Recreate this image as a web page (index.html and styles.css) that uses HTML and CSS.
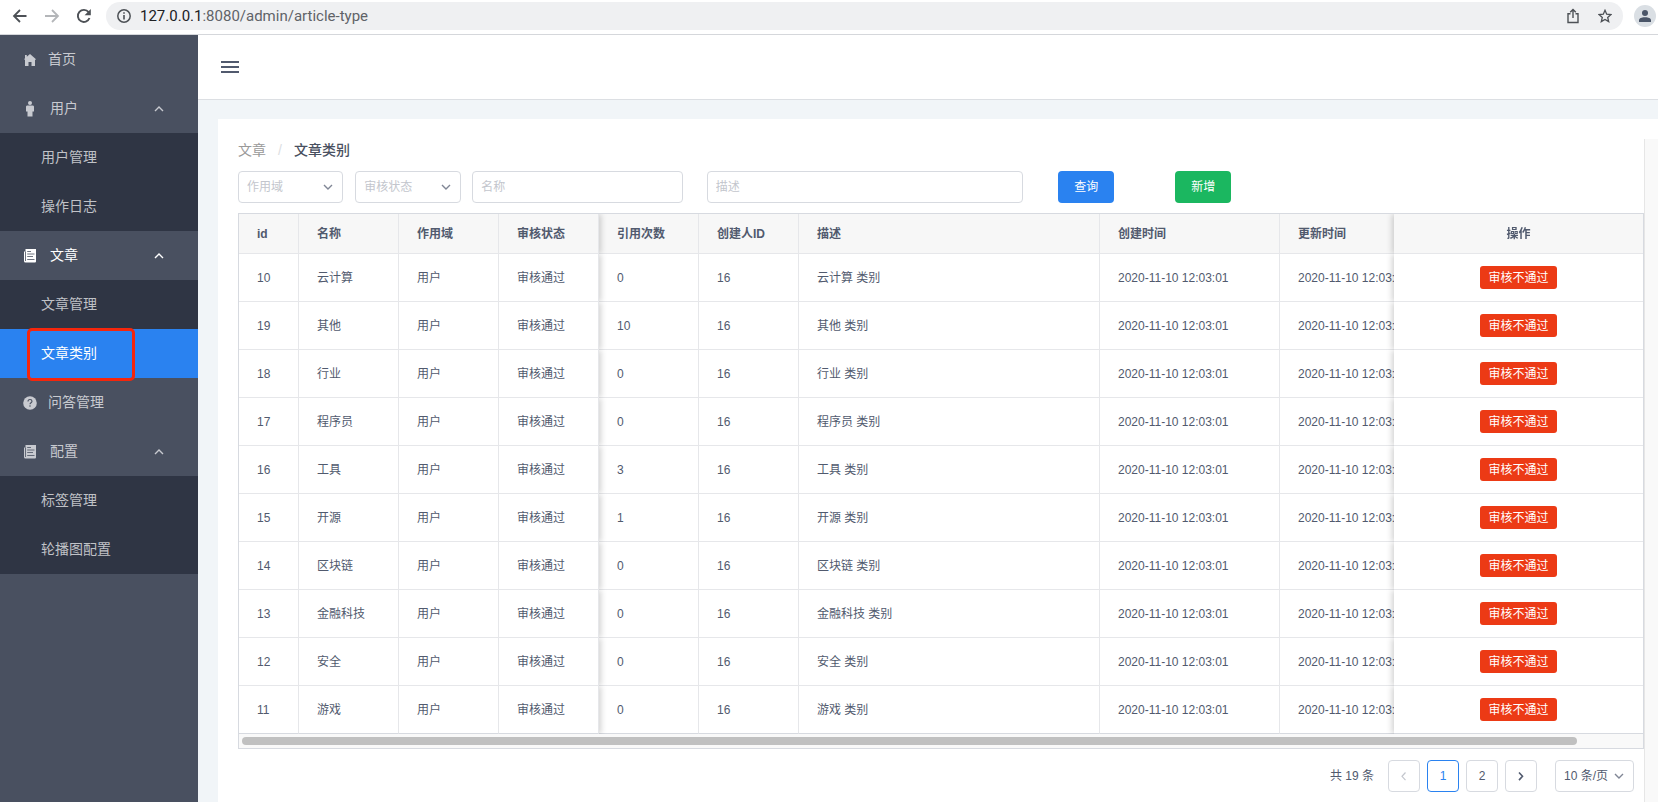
FILE: index.html
```html
<!DOCTYPE html>
<html lang="zh-CN">
<head>
<meta charset="utf-8">
<title>文章类别</title>
<link rel="stylesheet" href="styles.css">
</head>
<body>
<svg class="defs" aria-hidden="true">
  <symbol id="up" viewBox="0 0 10 10"><path d="M1 7l4-4 4 4" fill="none" stroke="currentColor" stroke-width="1.4"/></symbol>
  <symbol id="down" viewBox="0 0 10 10"><path d="M1 3l4 4 4-4" fill="none" stroke="currentColor" stroke-width="1.4"/></symbol>
  <symbol id="paper" viewBox="0 0 12 14"><path d="M1.500 0H12v12.500a1 1 0 0 1-1 1H1.500A1.500 1.500 0 0 1 0 12V2.500h1.500z" fill="currentColor"/><path d="M1.500 2.500v9.500M3.200 2.500H7M3.200 5h7.300M3.200 7.500h5.800M3.200 10.500h7.300" stroke="#495060" stroke-width=".8"/></symbol>
</svg>

<header class="browser">
  <button class="nav" aria-label="后退"><svg width="16" height="16" viewBox="0 0 16 16"><path d="M14.500 8H2M8 2L2 8l6 6" fill="none" stroke="#4d5156" stroke-width="1.800"/></svg></button>
  <button class="nav" aria-label="前进"><svg width="16" height="16" viewBox="0 0 16 16"><path d="M1 8h12.500M8 2l6 6-6 6" fill="none" stroke="#b4b6b9" stroke-width="1.800"/></svg></button>
  <button class="nav" aria-label="刷新"><svg width="16" height="16" viewBox="0 0 16 16"><path d="M13.500 10A6 6 0 1 1 12.600 4.200" fill="none" stroke="#4d5156" stroke-width="1.900"/><path d="M14.800 1v6.200H8.600z" fill="#4d5156"/></svg></button>
  <div class="address">
    <svg width="14" height="14" viewBox="0 0 14 14"><circle cx="7" cy="7" r="6.200" fill="none" stroke="#4d5156" stroke-width="1.500"/><path d="M7 6v4.500M7 3.200v1.600" stroke="#4d5156" stroke-width="1.600"/></svg>
    <span class="url"><b>127.0.0.1</b>:8080/admin/article-type</span>
    <button class="nav" aria-label="分享"><svg width="14" height="16" viewBox="0 0 14 16"><path d="M4.500 5.800H2v8.700h10V5.800H9.500M7 10V2M4.200 4.300L7 1.500l2.800 2.800" fill="none" stroke="#4d5156" stroke-width="1.400"/></svg></button>
    <button class="nav" aria-label="收藏"><svg width="14" height="14" viewBox="0 0 14 14"><path d="M7 1.300l1.700 3.900 4.200.4-3.200 2.800 1 4.200L7 10.400l-3.700 2.200 1-4.200L1.100 5.600l4.200-.4z" fill="none" stroke="#4d5156" stroke-width="1.300"/></svg></button>
  </div>
  <button class="avatar" aria-label="个人资料"><svg width="12" height="12" viewBox="0 0 12 12"><circle cx="6" cy="3" r="3" fill="#4a5568"/><path d="M0 12V9.500C1 7.500 4 7.200 6 7.200s5 .3 6 2.300V12z" fill="#4a5568"/></svg></button>
</header>

<div class="app">
  <nav class="sidebar">
    <a class="item" href="#"><svg width="12" height="12" viewBox="0 0 12 12"><path d="M6 0l6 5.200-.5.6H11V12H7.500V8h-3v4H1V5.800L0 5.200 1 4.300V1h1.800v1.800z" fill="currentColor"/></svg><span>首页</span></a>
    <button class="item group"><svg width="12" height="16" viewBox="0 0 12 16"><circle cx="6" cy="2" r="2" fill="currentColor"/><path d="M3.500 4.500h5c1 0 1.500.5 1.500 1.500v4.500H8.500V15.500h-5V10.500H2V6c0-1 .5-1.500 1.500-1.500z" fill="currentColor"/></svg><span>用户</span><svg class="caret" width="10" height="10"><use href="#up"/></svg></button>
    <div class="sub">
      <a class="leaf" href="#">用户管理</a>
      <a class="leaf" href="#">操作日志</a>
    </div>
    <button class="item group open"><svg width="12" height="14"><use href="#paper"/></svg><span>文章</span><svg class="caret" width="10" height="10"><use href="#up"/></svg></button>
    <div class="sub">
      <a class="leaf" href="#">文章管理</a>
      <a class="leaf active" href="#">文章类别</a>
    </div>
    <a class="item help" href="#"><svg width="14" height="14" viewBox="0 0 14 14"><circle cx="7" cy="7" r="6.800" fill="currentColor"/><path d="M5 5.500C5 4 6 3.500 7 3.500s2 .6 2 1.700C9 6.700 7 6.700 7 8.300M7 9.300v1.400" fill="none" stroke="#495060" stroke-width="1.100"/></svg><span>问答管理</span></a>
    <button class="item group"><svg width="12" height="14"><use href="#paper"/></svg><span>配置</span><svg class="caret" width="10" height="10"><use href="#up"/></svg></button>
    <div class="sub">
      <a class="leaf" href="#">标签管理</a>
      <a class="leaf" href="#">轮播图配置</a>
    </div>
  </nav>

  <div class="page">
    <div class="topbar">
      <button class="nav" aria-label="折叠菜单"><svg width="18" height="14" viewBox="0 0 18 14"><path d="M0 2h18M0 7h18M0 12h18" stroke="#515a6e" stroke-width="2"/></svg></button>
    </div>
    <div class="card">
      <main class="content">
        <div class="crumbs"><a href="#">文章</a><i>/</i><strong>文章类别</strong></div>
        <form class="filters">
          <div class="field select"><select aria-label="作用域"><option>作用域</option></select><svg width="10" height="10"><use href="#down"/></svg></div>
          <div class="field select"><select aria-label="审核状态"><option>审核状态</option></select><svg width="10" height="10"><use href="#down"/></svg></div>
          <div class="field"><input type="text" aria-label="名称" placeholder="名称"></div>
          <div class="field"><input type="text" aria-label="描述" placeholder="描述"></div>
          <div><button type="button" class="btn primary">查询</button></div>
          <div><button type="button" class="btn success">新增</button></div>
        </form>

        <div class="grid">
          <div class="viewport">
            <table>
              <colgroup><col class="w-id"><col class="w-s"><col class="w-s"><col class="w-s"><col class="w-s"><col class="w-s"><col class="w-desc"><col class="w-time"><col class="w-time"><col class="w-act"></colgroup>
              <thead><tr><th>id</th><th>名称</th><th>作用域</th><th class="pin">审核状态</th><th>引用次数</th><th>创建人ID</th><th>描述</th><th>创建时间</th><th>更新时间</th><th class="act">操作</th></tr></thead>
              <tbody>
                <tr><td>10</td><td>云计算</td><td>用户</td><td class="pin">审核通过</td><td>0</td><td>16</td><td>云计算 类别</td><td>2020-11-10 12:03:01</td><td>2020-11-10 12:03:01</td><td class="act"><button class="reject">审核不通过</button></td></tr>
                <tr><td>19</td><td>其他</td><td>用户</td><td class="pin">审核通过</td><td>10</td><td>16</td><td>其他 类别</td><td>2020-11-10 12:03:01</td><td>2020-11-10 12:03:01</td><td class="act"><button class="reject">审核不通过</button></td></tr>
                <tr><td>18</td><td>行业</td><td>用户</td><td class="pin">审核通过</td><td>0</td><td>16</td><td>行业 类别</td><td>2020-11-10 12:03:01</td><td>2020-11-10 12:03:01</td><td class="act"><button class="reject">审核不通过</button></td></tr>
                <tr><td>17</td><td>程序员</td><td>用户</td><td class="pin">审核通过</td><td>0</td><td>16</td><td>程序员 类别</td><td>2020-11-10 12:03:01</td><td>2020-11-10 12:03:01</td><td class="act"><button class="reject">审核不通过</button></td></tr>
                <tr><td>16</td><td>工具</td><td>用户</td><td class="pin">审核通过</td><td>3</td><td>16</td><td>工具 类别</td><td>2020-11-10 12:03:01</td><td>2020-11-10 12:03:01</td><td class="act"><button class="reject">审核不通过</button></td></tr>
                <tr><td>15</td><td>开源</td><td>用户</td><td class="pin">审核通过</td><td>1</td><td>16</td><td>开源 类别</td><td>2020-11-10 12:03:01</td><td>2020-11-10 12:03:01</td><td class="act"><button class="reject">审核不通过</button></td></tr>
                <tr><td>14</td><td>区块链</td><td>用户</td><td class="pin">审核通过</td><td>0</td><td>16</td><td>区块链 类别</td><td>2020-11-10 12:03:01</td><td>2020-11-10 12:03:01</td><td class="act"><button class="reject">审核不通过</button></td></tr>
                <tr><td>13</td><td>金融科技</td><td>用户</td><td class="pin">审核通过</td><td>0</td><td>16</td><td>金融科技 类别</td><td>2020-11-10 12:03:01</td><td>2020-11-10 12:03:01</td><td class="act"><button class="reject">审核不通过</button></td></tr>
                <tr><td>12</td><td>安全</td><td>用户</td><td class="pin">审核通过</td><td>0</td><td>16</td><td>安全 类别</td><td>2020-11-10 12:03:01</td><td>2020-11-10 12:03:01</td><td class="act"><button class="reject">审核不通过</button></td></tr>
                <tr><td>11</td><td>游戏</td><td>用户</td><td class="pin">审核通过</td><td>0</td><td>16</td><td>游戏 类别</td><td>2020-11-10 12:03:01</td><td>2020-11-10 12:03:01</td><td class="act"><button class="reject">审核不通过</button></td></tr>
              </tbody>
            </table>
          </div>
          <div class="track"><div class="thumb"></div></div>
        </div>

        <div class="pager">
          <span class="total">共 19 条</span>
          <button class="pg" aria-label="上一页" disabled><svg width="10" height="10" viewBox="0 0 10 10"><path d="M6.500 1.500L3 5.300l3.500 3.800" fill="none" stroke="currentColor" stroke-width="1.200"/></svg></button>
          <button class="pg current">1</button>
          <button class="pg">2</button>
          <button class="pg" aria-label="下一页"><svg width="10" height="10" viewBox="0 0 10 10"><path d="M3 1.500l3.500 3.800L3 9.100" fill="none" stroke="currentColor" stroke-width="1.600"/></svg></button>
          <div class="select size"><select aria-label="每页条数"><option>10 条/页</option></select><svg width="10" height="10"><use href="#down"/></svg></div>
        </div>
      </main>
      <div class="gutter"></div>
    </div>
  </div>
</div>
</body>
</html>
```
FILE: styles.css
```css
* { box-sizing: border-box; }
html, body { height: 100%; }
body {
  margin: 0;
  display: flex;
  flex-direction: column;
  overflow: hidden;
  font: 12px/18px "Liberation Sans", "Noto Sans CJK SC", sans-serif;
  color: #515a6e;
  background: #fff;
}
button, input, select { font: inherit; color: inherit; margin: 0; }
button { padding: 0; border: 0; background: none; }
a { color: inherit; text-decoration: none; }
.defs { display: none; }
.nav { display: flex; }

.browser {
  flex: none;
  display: flex;
  align-items: center;
  gap: 16px;
  height: 35px;
  padding: 0 2px 3px 12px;
  border-bottom: 1px solid #d5d7db;
}
.address {
  flex: 1;
  display: flex;
  align-items: center;
  gap: 18px;
  height: 28px;
  margin-right: -5px;
  margin-left: -2px;
  padding: 0 11px;
  border-radius: 14px;
  background: #eff0f2;
}
.url { flex: 1; margin-left: -9px; font: 15px/20px Roboto, sans-serif; color: #5f6368; }
.url b { font-weight: 400; color: #202124; }
.avatar {
  display: flex;
  align-items: center;
  justify-content: center;
  width: 22px;
  height: 22px;
  border-radius: 50%;
  background: #dadfe4;
}

.app { flex: 1; display: flex; min-height: 0; }
.sidebar { flex: none; width: 198px; background: #495060; font-size: 14px; color: #c8cad0; }
.item {
  display: flex;
  align-items: center;
  gap: 12px;
  width: 100%;
  height: 49px;
  padding: 0 34px 0 24px;
  text-align: left;
}
.item span { padding-bottom: 2px; }
.item > svg:first-child { flex: none; }
.group { gap: 14px; }
.group.open { color: #fff; }
.help { gap: 11px; padding-left: 23px; }
.caret { margin-left: auto; }
.sub { background: #2f3544; }
.leaf { position: relative; display: flex; align-items: center; height: 49px; padding: 0 0 2px 41px; color: #c0c2c7; }
.leaf.active { background: #2a82f0; color: #fff; }
.leaf.active::after {
  content: "";
  position: absolute;
  inset: -1px 63px -3px 27px;
  z-index: 1;
  border: 3px solid #f5260c;
  border-radius: 5px;
}

.page { flex: 1; display: flex; flex-direction: column; min-width: 0; background: #f1f5f8; }
.topbar {
  flex: none;
  display: flex;
  align-items: center;
  height: 65px;
  padding-left: 23px;
  background: #fff;
  border-bottom: 1px solid #dcdfe3;
}
.card { flex: 1; display: flex; min-height: 0; margin: 19px 0 0 20px; padding: 20px 0 0 20px; background: #fff; }
.content { flex: 1; min-width: 0; }
.gutter { flex: none; width: 14px; background: #f9f9f9; border-left: 1px solid #e6e6e6; }

.crumbs { display: flex; font-size: 14px; line-height: 22px; color: #999; }
.crumbs i { margin: 0 12px; font-style: normal; color: #dcdee2; }
.crumbs strong { font-weight: 500; color: #495060; }

.filters { display: grid; grid-template-columns: 2fr 2fr 4fr 6fr 2fr 8fr; margin: 10px 0; }
.field { width: 90%; }
.select { position: relative; }
.select svg { position: absolute; top: 11px; right: 10px; color: #808695; pointer-events: none; }
.field input, .select select {
  display: block;
  width: 100%;
  height: 32px;
  padding: 0 8px;
  border: 1px solid #d7dae0;
  border-radius: 4px;
  background: #fff;
  appearance: none;
  outline: 0;
}
.field select, .field input::placeholder { color: #c3c6cd; }
.btn { display: block; width: 56px; height: 32px; border-radius: 4px; color: #fff; }
.primary { background: #2a82f0; }
.success { background: #1bb760; }

.grid { border: 1px solid #d7dae0; }
.viewport { overflow: hidden; }
table { width: 1470px; table-layout: fixed; border-collapse: separate; border-spacing: 0; }
.w-id { width: 60px; }
.w-s { width: 100px; }
.w-desc { width: 301px; }
.w-time { width: 180px; }
.w-act { width: 249px; }
th, td {
  height: 48px;
  padding: 0 18px;
  border-right: 1px solid #e6e7ea;
  border-bottom: 1px solid #e6e7ea;
  background: #fff;
  text-align: left;
  white-space: nowrap;
}
th { height: 40px; background: #f7f7f7; font-weight: 700; }
tbody tr:last-child td { border-bottom-color: #d7dae0; }
.pin { position: relative; z-index: 1; box-shadow: 2px 0 6px rgba(0, 0, 0, .18); clip-path: inset(0 -8px 0 0); }
.act { position: sticky; right: 0; z-index: 2; border-right: 0; text-align: center; box-shadow: -2px 0 6px rgba(0, 0, 0, .18); clip-path: inset(0 0 0 -8px); }
.reject { height: 23px; padding: 0 8px; border-radius: 3px; background: #ec3a15; color: #fff; }
.track { height: 14px; padding: 3px; background: #f9f9f9; }
.thumb { width: 95.5%; height: 8px; border-radius: 4px; background: #c0c0c0; }

.pager { display: flex; align-items: center; justify-content: flex-end; gap: 7px; margin-top: 11px; padding-right: 10px; }
.total { margin-right: 7px; }
.pg {
  display: flex;
  align-items: center;
  justify-content: center;
  width: 32px;
  height: 32px;
  border: 1px solid #d7dae0;
  border-radius: 4px;
}
.pg:disabled { color: #c3c6cd; }
.pg.current { border-color: #2a82f0; color: #2a82f0; }
.size { width: 79px; margin-left: 11px; }
```
